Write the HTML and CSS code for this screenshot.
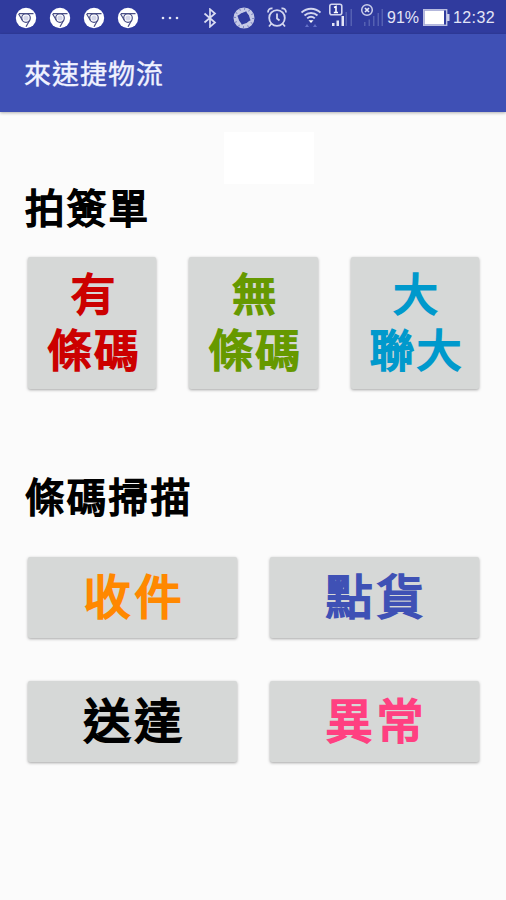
FILE: index.html
```html
<!DOCTYPE html>
<html lang="zh-Hant">
<head>
  <meta charset="UTF-8" />
  <meta name="viewport" content="width=device-width, initial-scale=1.0"/>
  <title>來速捷物流</title>
  <link rel="stylesheet" href="styles.css">
</head>
<body>
  <svg class="defs" width="0" height="0">
    <symbol id="chrome" viewBox="0 0 22 22">
      <circle cx="11" cy="11" r="10.2" fill="#fff"/>
      <g fill="none" stroke="#4a4f86" stroke-width="1.2">
        <circle cx="11" cy="11" r="4.3"/>
        <path d="M4 6.7H18.5M7.2 13L3.5 6.7M14.8 13L11 19.8"/>
      </g>
      <circle cx="11" cy="11" r="2.6" fill="#d5d7ea"/>
    </symbol>
  </svg>

  <div class="status-bar">
    <div class="notifications">
      <svg class="chrome-icon"><use href="#chrome"/></svg>
      <svg class="chrome-icon"><use href="#chrome"/></svg>
      <svg class="chrome-icon"><use href="#chrome"/></svg>
      <svg class="chrome-icon"><use href="#chrome"/></svg>
      <svg class="more-icon" width="18" height="4" viewBox="0 0 18 4" fill="#e4e6f5">
        <circle cx="2" cy="2" r="1.3"/><circle cx="9" cy="2" r="1.3"/><circle cx="16" cy="2" r="1.3"/>
      </svg>
    </div>

    <div class="system">
      <svg class="bluetooth" width="14" height="20" viewBox="0 0 14 20" fill="none" stroke="#d9dcf2" stroke-width="1.7">
        <path d="M1.5 5.5L12 14.5L7 18.8V1.2L12 5.5L1.5 14.5"/>
      </svg>
      <svg class="sync" width="24" height="22" viewBox="0 0 24 22" fill="none">
        <circle cx="12" cy="11" r="8" stroke="#c5c9e6" stroke-width="5"/>
        <circle cx="12" cy="11" r="9" stroke="#7e86c2" stroke-width="2" stroke-dasharray="1 3.7"/>
        <path d="M12 4L19 11L12 18L5 11Z" fill="#303b9e" transform="rotate(18 12 11)"/>
      </svg>
      <svg class="alarm" width="20" height="21" viewBox="0 0 20 21" fill="none" stroke="#d3d6ef" stroke-width="1.8">
        <circle cx="10" cy="11" r="7.8"/>
        <path d="M10 6.5V11.5L12.5 13.5M1 5.5C1 2.5 3 1 5.5 1.5M19 5.5C19 2.5 17 1 14.5 1.5M4.5 16.5L2 19.5M15.5 16.5L18 19.5"/>
      </svg>
      <svg class="wifi" width="20" height="21" viewBox="0 0 20 21" fill="none" stroke="#d3d6ef" stroke-width="1.9">
        <path d="M0.5 5.5C6 0.5 14 0.5 19.5 5.5M3.5 8.5C7 5.2 13 5.2 16.5 8.5M6.2 11.4C8.5 9.3 11.5 9.3 13.8 11.4"/>
        <path d="M7.5 13.2H12.5L10 16Z" fill="#fff" stroke="none"/>
        <path d="M4 20L6 17L8 20ZM12 20L14 17L16 20Z" fill="#6370c8" stroke="none"/>
      </svg>
      <svg class="signal" width="26" height="24" viewBox="0 0 26 24">
        <rect x="1.8" y="1.3" width="12" height="10.5" rx="2" fill="none" stroke="#d3d6ef" stroke-width="1.6"/>
        <path d="M6 4.5L8 3.5V9.5M5.8 9.5H10" fill="none" stroke="#fff" stroke-width="1.6"/>
        <path d="M4 20h2.5v3H4ZM8.5 17.5H11V23H8.5ZM13.5 13H16V23H13.5Z" fill="#e3e5f6"/>
        <path d="M17.5 9h1.5v14h-1.5ZM22.5 6h1.5v17h-1.5Z" fill="#5561b2"/>
      </svg>
      <svg class="signal second" width="26" height="24" viewBox="0 0 26 24">
        <circle cx="8" cy="7" r="5.3" fill="none" stroke="#c9cdea" stroke-width="1.5"/>
        <path d="M6 5L10 9M10 5L6 9" stroke="#e3e5f6" stroke-width="1.7"/>
        <path d="M5 19h1.5v4H5ZM9.5 16.5H11V23H9.5ZM14 13h1.5v10H14ZM18.5 10H20v13h-1.5ZM22.5 6H24v17h-1.5Z" fill="#5561b2"/>
      </svg>
      <span class="percent">91%</span>
      <svg class="battery" width="27" height="17" viewBox="0 0 27 17">
        <rect x="0.7" y="0.7" width="23" height="15.6" fill="none" stroke="#b9bde0" stroke-width="1.4"/>
        <rect x="1.5" y="1.5" width="19.5" height="14" fill="#fff"/>
        <path d="M24 5h2.5v7H24Z" fill="#c9cdea"/>
      </svg>
      <span class="clock">12:32</span>
    </div>
  </div>

  <div class="app-bar">來速捷物流</div>

  <div class="content">
    <div class="blank"></div>

    <h2 class="title">拍簽單</h2>
    <div class="row">
      <button class="btn square red">有<br>條碼</button>
      <button class="btn square green">無<br>條碼</button>
      <button class="btn square blue">大<br>聯大</button>
    </div>

    <h2 class="title scan">條碼掃描</h2>
    <div class="row">
      <button class="btn wide orange">收件</button>
      <button class="btn wide indigo">點貨</button>
    </div>
    <div class="row">
      <button class="btn wide black">送達</button>
      <button class="btn wide pink">異常</button>
    </div>
  </div>
</body>
</html>
```

FILE: styles.css
```css
* {
  box-sizing: border-box;
}
body {
  margin: 0;
  height: 900px;
  overflow: hidden;
  background-color: #fbfbfb;
  font-family: 'Liberation Sans', 'Noto Sans CJK TC', sans-serif;
}
svg {
  display: block;
  flex: none;
}
.defs {
  position: absolute;
}

/* status bar */
.status-bar {
  display: flex;
  justify-content: space-between;
  height: 34px;
  padding: 1px 11px 0 15px;
  background-color: #303b9e;
}
.notifications,
.system {
  display: flex;
  align-items: center;
}
.notifications {
  gap: 12px;
}
.chrome-icon {
  width: 22px;
  height: 22px;
}
.more-icon {
  margin-left: 10px;
}
.bluetooth {
  margin-right: 15px;
}
.sync {
  margin-right: 11px;
}
.alarm {
  margin-right: 14px;
}
.wifi {
  margin-right: 7px;
}
.signal {
  margin: 0 5px 5px 0;
}
.signal.second {
  margin-right: 2px;
}
.percent,
.clock {
  font-size: 16px;
  line-height: 33px;
  color: #e3e5f6;
  white-space: nowrap;
}
.percent {
  width: 33px;
}
.battery {
  margin: 0 3px 0 3px;
}
.clock {
  width: 42px;
  letter-spacing: 0.4px;
}

/* app bar */
.app-bar {
  height: 78px;
  padding: 2px 0 0 24px;
  background-color: #3f50b5;
  box-shadow: 0 1px 3px rgba(0, 0, 0, 0.3);
  color: #f0f2ff;
  font-size: 27px;
  letter-spacing: 1px;
  line-height: 78px;
  -webkit-text-stroke: 0.4px #f0f2ff;
}

/* content */
.content {
  padding: 20px 27px 0 28px;
}
.blank {
  width: 90px;
  height: 52px;
  margin-left: 196px;
  background-color: #fff;
}
.title {
  margin: 0 0 19px -3px;
  height: 54px;
  color: #000;
  font-size: 39.5px;
  font-weight: 400;
  letter-spacing: 2.3px;
  line-height: 50px;
  -webkit-text-stroke: 1.8px currentColor;
}
.title.scan {
  margin: 84px 0 30px -3px;
}
.row {
  display: flex;
  gap: 33px;
  margin-bottom: 43px;
}
.btn {
  flex: 1;
  padding: 0;
  border: none;
  border-radius: 2px;
  background-color: #d6d8d7;
  box-shadow: 0 1px 3px rgba(0, 0, 0, 0.35);
  font-family: inherit;
  font-weight: 400;
  white-space: nowrap;
  -webkit-text-stroke: 2.2px currentColor;
}
.square {
  height: 132px;
  padding: 2px 0 0 4px;
  font-size: 44.5px;
  letter-spacing: 2.5px;
  line-height: 56px;
}
.wide {
  height: 81px;
  padding-left: 4px;
  font-size: 47px;
  letter-spacing: 4px;
  line-height: 79px;
}
.red {
  color: #cc0000;
}
.green {
  color: #669900;
}
.blue {
  color: #0099cc;
}
.orange {
  color: #ff8800;
}
.indigo {
  color: #3f51b5;
}
.black {
  color: #000;
}
.pink {
  color: #ff4081;
}
```
